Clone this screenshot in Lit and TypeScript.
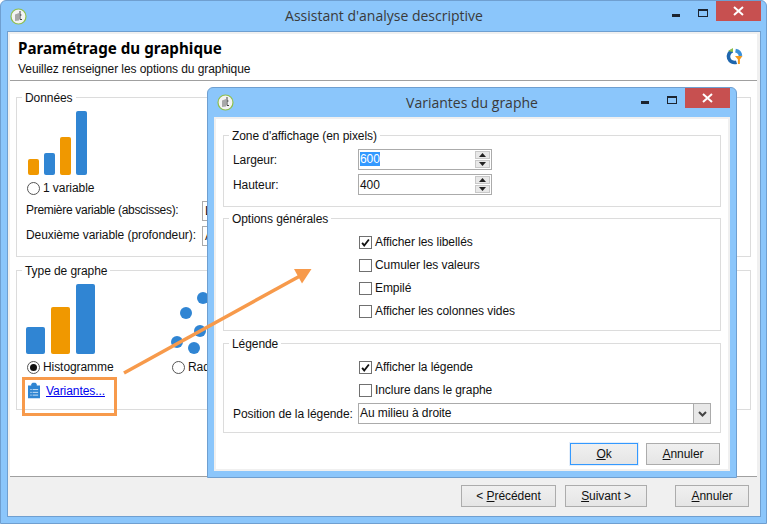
import { LitElement, css, html, svg } from 'lit';
import { customElement } from 'lit/decorators.js';

const appIcon = html`<svg class="app-icon" width="17" height="17" viewBox="0 0 17 17">
  <circle cx="8.5" cy="8.500" r="7.500" fill="#f3f3f3" stroke="#8fbf4d" stroke-width="1.200"></circle>
  <path d="M5 6.500 9 5v7.500L5 13z" fill="#a8a8a8"></path>
  <path d="M10 3v8.500M10 11.500h2M10 7h1.500" fill="none" stroke="#444" stroke-width="1"></path>
</svg>`;

const checkMark = svg`<path d="M2.5 6.5 5 9.5 10.5 2.5" fill="none" stroke="#111" stroke-width="2.2"></path>`;

@customElement('app-root')
export class AppRoot extends LitElement {
  static override styles = css`
    :host {
      display: block;
      position: relative;
      width: 768px;
      height: 525px;
      overflow: hidden;
      background: #fff;
      font-family: 'Liberation Sans', Arial, sans-serif;
      font-size: 12px;
      letter-spacing: -0.07px;
      color: #111;
    }

    .window {
      position: absolute;
      box-sizing: border-box;
      display: flex;
      flex-direction: column;
      border: 1px solid #6f9fd0;
      border-radius: 6px 6px 0 0;
      background: #8bc6fb;
    }

    .window--main {
      left: 0;
      top: 0;
      width: 767px;
      height: 524px;
      padding: 0 5px 6px 6px;
    }

    .window--dialog {
      left: 207px;
      top: 87px;
      width: 530px;
      height: 391px;
      padding: 0 6px 6px;
    }

    .titlebar {
      display: grid;
      grid-template-columns: 1fr auto 1fr;
      flex: none;
      height: 30px;
    }

    .window--dialog .titlebar {
      height: 29px;
    }

    .app-icon {
      margin: 7px 0 0 3px;
    }

    .window--dialog .app-icon {
      margin-top: 6px;
    }

    .title {
      font-family: 'Open Sans', sans-serif;
      font-size: 14px;
      letter-spacing: 0;
      line-height: 30px;
      color: #3a3a3a;
    }

    .controls {
      display: flex;
      justify-content: flex-end;
      align-items: flex-start;
    }

    .min {
      width: 8px;
      height: 3px;
      margin-top: 13px;
      background: #1c2430;
    }

    .max {
      box-sizing: border-box;
      width: 10px;
      height: 8px;
      margin: 8px 0 0 18px;
      border: 1px solid #1c2430;
      border-top-width: 2px;
    }

    .close {
      display: flex;
      align-items: center;
      justify-content: center;
      width: 45px;
      height: 20px;
      margin-left: 8px;
      background: #c75050;
    }

    .client {
      box-sizing: border-box;
      display: flex;
      flex: 1;
      flex-direction: column;
      min-height: 0;
      border: 1px solid #6f9fd0;
      background: #f0f0f0;
      padding-top: 2px;
    }

    .panel {
      box-sizing: border-box;
      height: 443px;
      margin: 0 3px 0 2px;
      background: #fff;
      border-bottom: 1px solid #a0a0a0;
    }

    .header {
      box-sizing: border-box;
      display: flex;
      justify-content: space-between;
      height: 47px;
      padding: 5px 14px 0 8px;
      border-bottom: 1px solid #a0a0a0;
    }

    .heading {
      font-family: 'Noto Sans', sans-serif;
      font-size: 15.2px;
      font-weight: 700;
      letter-spacing: 0;
      line-height: 18px;
      color: #000;
    }

    .subheading {
      margin-top: 5px;
      line-height: 15px;
    }

    .logo {
      margin-top: 9px;
    }

    .content {
      display: flex;
      flex-direction: column;
      gap: 13px;
      padding: 16px 6px 0;
    }

    .group {
      box-sizing: border-box;
      position: relative;
      border: 1px solid #dcdcdc;
    }

    .group-title {
      position: absolute;
      top: -8px;
      left: 5px;
      padding: 0 3px;
      line-height: 16px;
      background: #fff;
      color: #111;
    }

    .group--data {
      height: 160px;
      padding: 13px 0 0 11px;
    }

    .group--type {
      height: 140px;
      padding: 13px 0 0 9px;
    }

    .bars {
      display: flex;
      align-items: flex-end;
      gap: 5px;
    }

    .bar {
      width: 11px;
      border-radius: 2px;
      background: #3085d3;
    }

    .group--type .bars {
      gap: 6px;
      height: 70px;
    }

    .group--type .bar {
      width: 19px;
    }

    .bar--orange {
      background: #f09800;
    }

    .radio-row {
      display: flex;
      align-items: center;
      gap: 3px;
      height: 14px;
      white-space: nowrap;
    }

    .radio {
      box-sizing: border-box;
      display: flex;
      align-items: center;
      justify-content: center;
      flex: none;
      width: 13px;
      height: 13px;
      border: 1px solid #555;
      border-radius: 50%;
      background: #fff;
    }

    .radio--on::after {
      content: '';
      width: 7px;
      height: 7px;
      border-radius: 50%;
      background: #111;
    }

    .group--data .radio-row {
      margin: 6px 0 0 -1px;
    }

    .group--type .radio-row {
      margin: 6px 0 0 1px;
    }

    .data-form {
      display: flex;
      flex-direction: column;
      gap: 5px;
      margin: 6px 0 0 -2px;
    }

    .field {
      display: flex;
      align-items: center;
    }

    .data-form .field-label {
      width: 176px;
      margin-top: -2px;
    }

    .field-label--tight {
      letter-spacing: -0.3px;
    }

    .textbox {
      box-sizing: border-box;
      width: 200px;
      height: 20px;
      padding-left: 2px;
      border: 1px solid #ababab;
      line-height: 18px;
      background: #fff;
    }

    .type-columns {
      display: flex;
    }

    .type-column {
      width: 145px;
    }

    .dots {
      display: block;
    }

    .variants {
      display: flex;
      align-items: center;
      gap: 6px;
      margin: 8px 0 0 2px;
    }

    .variants a {
      color: #0000ee;
      text-decoration: underline;
    }

    .footer {
      display: flex;
      flex: 1;
      justify-content: flex-end;
      align-items: flex-start;
      gap: 9px;
      padding: 8px 11px 0 0;
    }

    .btn {
      box-sizing: border-box;
      height: 22px;
      border: 1px solid #acacac;
      line-height: 20px;
      text-align: center;
      background: linear-gradient(#f0f0f0, #e5e5e5);
      color: #111;
    }

    .btn--prev {
      width: 95px;
    }

    .btn--next {
      width: 82px;
    }

    .btn--ok {
      width: 68px;
      border-color: #3399ff;
      box-shadow: 0 0 0 1px #e4eefa;
    }

    .btn--cancel {
      width: 74px;
    }

    .btn--apart {
      margin-left: 19px;
    }

    .dialog-client {
      box-sizing: border-box;
      flex: 1;
      min-height: 0;
      padding: 16px 7px 0;
      border: 2px solid #f0f0f0;
      background: #fff;
    }

    .group--zone {
      height: 72px;
      padding: 13px 0 0 9px;
    }

    .group--options {
      height: 113px;
      margin-top: 11px;
      padding: 12px 0 0 135px;
    }

    .group--legend {
      height: 90px;
      margin-top: 12px;
      padding: 12px 0 0 135px;
    }

    .zone-fields {
      display: flex;
      flex-direction: column;
      gap: 4px;
    }

    .zone-fields .field-label {
      width: 125px;
    }

    .spin {
      box-sizing: border-box;
      display: flex;
      align-items: center;
      justify-content: space-between;
      width: 134px;
      height: 21px;
      padding: 0 1px 0 1px;
      border: 1px solid #ababab;
      background: #fff;
    }

    .selected {
      background: #3399ff;
      color: #fff;
      line-height: 19px;
    }

    .spin-buttons {
      display: flex;
      flex-direction: column;
      gap: 1px;
    }

    .spin-button {
      display: flex;
      align-items: center;
      justify-content: center;
      width: 15px;
      height: 8px;
      background: #e8e8e8;
      border: 1px solid #c8c8c8;
      box-sizing: border-box;
    }

    .check-row {
      display: flex;
      align-items: center;
      gap: 3px;
      height: 23px;
    }

    .check-label {
      margin-top: -2px;
    }

    .checkbox {
      box-sizing: border-box;
      display: flex;
      flex: none;
      width: 13px;
      height: 13px;
      border: 1px solid #707070;
      background: #fff;
    }

    .legend-field {
      display: flex;
      align-items: center;
      margin: 1px 0 0 -126px;
    }

    .legend-field .field-label {
      width: 125px;
    }

    .select {
      box-sizing: border-box;
      display: flex;
      justify-content: space-between;
      width: 353px;
      height: 21px;
      padding-left: 1px;
      border: 1px solid #ababab;
      line-height: 19px;
      background: #fff;
    }

    .select-arrow {
      display: flex;
      align-items: center;
      justify-content: center;
      width: 16px;
      border-left: 1px solid #ababab;
      background: #e8e8e8;
    }

    .dialog-actions {
      display: flex;
      justify-content: flex-end;
      gap: 8px;
      margin: 10px 1px 0 0;
    }

    .annotation {
      position: absolute;
      left: 0;
      top: 0;
      pointer-events: none;
    }
  `;

  private titlebar(title: string) {
    return html`<div class="titlebar">
      <div>${appIcon}</div>
      <div class="title">${title}</div>
      <div class="controls">
        <span class="min"></span>
        <span class="max"></span>
        <span class="close">
          <svg width="11" height="10" viewBox="0 0 11 10">
            <path d="M1 1l9 8M10 1l-9 8" stroke="#fff" stroke-width="2"></path>
          </svg>
        </span>
      </div>
    </div>`;
  }

  private bars(heights: [number, boolean][]) {
    return html`<div class="bars">
      ${heights.map(
        ([h, orange]) =>
          html`<div class="bar ${orange ? 'bar--orange' : ''}" style="height:${h}px"></div>`,
      )}
    </div>`;
  }

  private spin(value: unknown) {
    const chevron = (d: string) =>
      html`<svg width="7" height="4" viewBox="0 0 7 4"><path d=${d} fill="#222"></path></svg>`;
    return html`<div class="spin">
      <span>${value}</span>
      <span class="spin-buttons">
        <span class="spin-button">${chevron('M3.5 0 7 4H0z')}</span>
        <span class="spin-button">${chevron('M0 0h7L3.5 4z')}</span>
      </span>
    </div>`;
  }

  private check(label: string, checked = false) {
    return html`<div class="check-row">
      <span class="checkbox">
        ${checked ? html`<svg width="11" height="11" viewBox="0 0 13 12">${checkMark}</svg>` : ''}
      </span>
      <span class="check-label">${label}</span>
    </div>`;
  }

  override render() {
    const dots = [
      [15, 29],
      [32, 14],
      [29, 47],
      [6, 58],
      [23, 64],
    ];

    return html`
      <div class="window window--main">
        ${this.titlebar("Assistant d'analyse descriptive")}
        <div class="client">
          <div class="panel">
            <div class="header">
              <div>
                <div class="heading">Paramétrage du graphique</div>
                <div class="subheading">Veuillez renseigner les options du graphique</div>
              </div>
              <svg class="logo" width="17" height="17" viewBox="0 0 17 17">
                <path d="M6.500 2.800A6 6 0 0 0 10.500 14.200" fill="none" stroke="#1f66ad" stroke-width="3.600"></path>
                <path d="M9.500 2.600A6 6 0 0 1 14.500 8" fill="none" stroke="#3a8fd8" stroke-width="3.600"></path>
                <path d="M2 3 7 0v4z" fill="#8cc04b"></path>
                <path d="M9 8h7.500l-2.600 3.500V16h-2v-4.500z" fill="#f49a1e"></path>
              </svg>
            </div>
            <div class="content">
              <div class="group group--data">
                <span class="group-title">Données</span>
                ${this.bars([
                  [16, true],
                  [22, false],
                  [38, true],
                  [64, false],
                ])}
                <div class="radio-row"><span class="radio"></span>1 variable</div>
                <div class="data-form">
                  <div class="field">
                    <span class="field-label field-label--tight">Première variable (abscisses):</span>
                    <span class="textbox">L</span>
                  </div>
                  <div class="field">
                    <span class="field-label">Deuxième variable (profondeur):</span>
                    <span class="textbox">A</span>
                  </div>
                </div>
              </div>
              <div class="group group--type">
                <span class="group-title">Type de graphe</span>
                <div class="type-columns">
                  <div class="type-column">
                    ${this.bars([
                      [27, false],
                      [47, true],
                      [70, false],
                    ])}
                    <div class="radio-row"><span class="radio radio--on"></span>Histogramme</div>
                    <div class="variants">
                      <svg width="12" height="17" viewBox="0 0 13 17">
                        <path d="M0 3h3.500V1.500L5 0h3l1.500 1.500V3H13v14H0z" fill="#2f85d2"></path>
                        <path d="M2.500 7.500h1.500M5 7.500h6M2.500 10.500h1.500M5 10.500h6M2.500 13.500h1.500M5 13.500h6" stroke="#d5e8f8"></path>
                      </svg>
                      <a>Variantes...</a>
                    </div>
                  </div>
                  <div class="type-column">
                    <svg class="dots" width="50" height="70" viewBox="0 0 50 70">
                      ${dots.map(([x, y]) => svg`<circle cx=${x} cy=${y} r="6" fill="#3085d3"></circle>`)}
                    </svg>
                    <div class="radio-row"><span class="radio"></span>Radar</div>
                  </div>
                </div>
              </div>
            </div>
          </div>
          <div class="footer">
            <div class="btn btn--prev">&lt; <u>P</u>récédent</div>
            <div class="btn btn--next"><u>S</u>uivant &gt;</div>
            <div class="btn btn--cancel btn--apart"><u>A</u>nnuler</div>
          </div>
        </div>
      </div>

      <div class="window window--dialog">
        ${this.titlebar('Variantes du graphe')}
        <div class="dialog-client">
          <div class="group group--zone">
            <span class="group-title">Zone d'affichage (en pixels)</span>
            <div class="zone-fields">
              <div class="field">
                <span class="field-label">Largeur:</span>
                ${this.spin(html`<span class="selected">600</span>`)}
              </div>
              <div class="field">
                <span class="field-label">Hauteur:</span>
                ${this.spin('400')}
              </div>
            </div>
          </div>
          <div class="group group--options">
            <span class="group-title">Options générales</span>
            ${this.check('Afficher les libellés', true)}
            ${this.check('Cumuler les valeurs')}
            ${this.check('Empilé')}
            ${this.check('Afficher les colonnes vides')}
          </div>
          <div class="group group--legend">
            <span class="group-title">Légende</span>
            ${this.check('Afficher la légende', true)}
            ${this.check('Inclure dans le graphe')}
            <div class="legend-field">
              <span class="field-label">Position de la légende:</span>
              <div class="select">
                <span>Au milieu à droite</span>
                <span class="select-arrow">
                  <svg width="9" height="6" viewBox="0 0 9 6">
                    <path d="M1 1l3.500 3.500L8 1" fill="none" stroke="#444" stroke-width="2"></path>
                  </svg>
                </span>
              </div>
            </div>
          </div>
          <div class="dialog-actions">
            <div class="btn btn--ok"><u>O</u>k</div>
            <div class="btn btn--cancel"><u>A</u>nnuler</div>
          </div>
        </div>
      </div>

      <svg class="annotation" width="768" height="525" viewBox="0 0 768 525">
        <rect x="23.500" y="378.500" width="92" height="36" fill="none" stroke="#f79a4b" stroke-width="3"></rect>
        <path d="M124 373 300 276" fill="none" stroke="#f79a4b" stroke-width="3.500"></path>
        <path d="M311.500 269H294l8 14.500z" fill="#f79a4b"></path>
      </svg>
    `;
  }
}

declare global {
  interface HTMLElementTagNameMap {
    'app-root': AppRoot;
  }
}
